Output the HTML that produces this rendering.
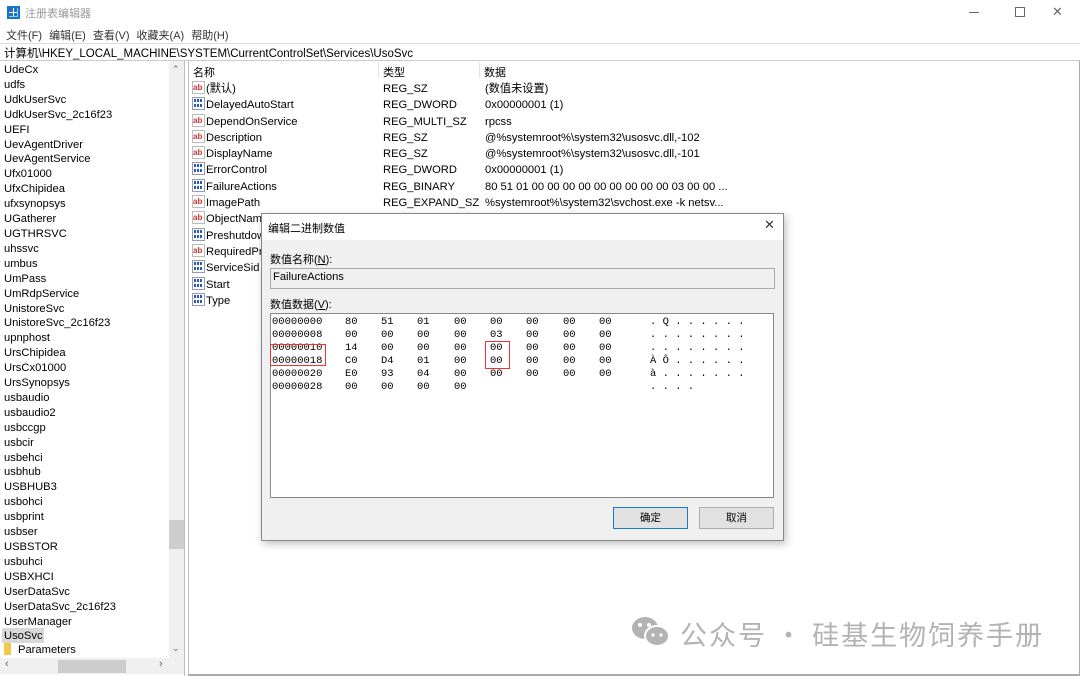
<!DOCTYPE html>
<html><head><meta charset="utf-8"><style>
*{margin:0;padding:0;box-sizing:border-box}
body{width:1080px;height:676px;overflow:hidden;background:#fff;font-family:"Liberation Sans","Noto Sans CJK SC",sans-serif;font-size:11px;color:#000;position:relative}
.a{position:absolute;white-space:nowrap}
.mono{font-family:"Liberation Mono","DejaVu Sans Mono",monospace;font-size:10.5px;line-height:12.9px;top:316px}
</style></head><body>
<!-- title bar -->
<div class="a" style="left:7px;top:6px;width:13px;height:13px;background:#1a73c8"></div>
<div class="a" style="left:9px;top:8px;width:9px;height:9px;border:1px solid #9cd;border-width:0 1px 1px 0;background:linear-gradient(#fff 0 0) 4px 0/1px 100% no-repeat,linear-gradient(#fff 0 0) 0 4px/100% 1px no-repeat"></div>
<div class="a" style="left:25px;top:5px;color:#999;font-size:11px">注册表编辑器</div>
<div class="a" style="left:969px;top:12px;width:10px;height:1px;background:#666"></div>
<div class="a" style="left:1015px;top:7px;width:10px;height:10px;border:1px solid #666"></div>
<div class="a" style="left:1052px;top:4px;font-size:13px;color:#666">✕</div>
<!-- menu -->
<div class="a" style="left:6px;top:27px;color:#333;word-spacing:4px">文件(F) 编辑(E) 查看(V) 收藏夹(A) 帮助(H)</div>
<div class="a" style="left:0;top:43px;width:1080px;height:18px;border-top:1px solid #ddd;border-bottom:1px solid #ccc"></div>
<div class="a" style="left:4px;top:45px;font-size:11.5px">计算机\HKEY_LOCAL_MACHINE\SYSTEM\CurrentControlSet\Services\UsoSvc</div>
<!-- left pane -->
<div class="a" style="left:0;top:61px;width:185px;height:615px;border-right:1px solid #bbb"></div>
<div class="a" style="left:169px;top:61px;width:15px;height:597px;background:#f0f0f0"></div>
<div class="a" style="left:169px;top:520px;width:15px;height:29px;background:#cdcdcd"></div>
<div class="a" style="left:172px;top:64px;color:#666;font-size:9px">⌃</div>
<div class="a" style="left:172px;top:643px;color:#666;font-size:9px">⌄</div>
<div class="a" style="left:0;top:658px;width:184px;height:16px;background:#f0f0f0"></div>
<div class="a" style="left:58px;top:660px;width:68px;height:13px;background:#cdcdcd"></div>
<div class="a" style="left:5px;top:658px;color:#666">‹</div>
<div class="a" style="left:159px;top:658px;color:#666">›</div>
<div class="a" style="left:2px;top:628px;width:42px;height:15px;background:#d9d9d9"></div>
<div class="a" style="left:4px;top:643px;width:7px;height:12px;background:#f4c64a"></div>
<div class="a" style="left:4px;top:63px;line-height:14.9px;font-size:11.2px">UdeCx<br>udfs<br>UdkUserSvc<br>UdkUserSvc_2c16f23<br>UEFI<br>UevAgentDriver<br>UevAgentService<br>Ufx01000<br>UfxChipidea<br>ufxsynopsys<br>UGatherer<br>UGTHRSVC<br>uhssvc<br>umbus<br>UmPass<br>UmRdpService<br>UnistoreSvc<br>UnistoreSvc_2c16f23<br>upnphost<br>UrsChipidea<br>UrsCx01000<br>UrsSynopsys<br>usbaudio<br>usbaudio2<br>usbccgp<br>usbcir<br>usbehci<br>usbhub<br>USBHUB3<br>usbohci<br>usbprint<br>usbser<br>USBSTOR<br>usbuhci<br>USBXHCI<br>UserDataSvc<br>UserDataSvc_2c16f23<br>UserManager<br>UsoSvc</div>
<div class="a" style="left:18px;top:644px;font-size:11.2px">Parameters</div>
<!-- right pane -->
<div class="a" style="left:188px;top:61px;width:892px;height:615px;border-left:1px solid #bbb;border-right:1px solid #aaa;border-bottom:2px solid #aaa"></div>
<div class="a" style="left:378px;top:62px;width:1px;height:16px;background:#e5e5e5"></div>
<div class="a" style="left:479px;top:62px;width:1px;height:16px;background:#e5e5e5"></div>
<div class="a" style="left:193px;top:64px">名称</div>
<div class="a" style="left:383px;top:64px">类型</div>
<div class="a" style="left:484px;top:64px">数据</div>
<div class="a" style="left:206px;top:81px;line-height:16.3px;font-size:11.2px">(默认)<br>DelayedAutoStart<br>DependOnService<br>Description<br>DisplayName<br>ErrorControl<br>FailureActions<br>ImagePath<br>ObjectName<br>Preshutdow<br>RequiredPr<br>ServiceSid<br>Start<br>Type</div>
<div class="a" style="left:383px;top:81px;line-height:16.3px;font-size:11.2px">REG_SZ<br>REG_DWORD<br>REG_MULTI_SZ<br>REG_SZ<br>REG_SZ<br>REG_DWORD<br>REG_BINARY<br>REG_EXPAND_SZ</div>
<div class="a" style="left:485px;top:81px;line-height:16.3px;font-size:11.2px">(数值未设置)<br>0x00000001 (1)<br>rpcss<br>@%systemroot%\system32\usosvc.dll,-102<br>@%systemroot%\system32\usosvc.dll,-101<br>0x00000001 (1)<br>80 51 01 00 00 00 00 00 00 00 00 00 03 00 00 ...<br>%systemroot%\system32\svchost.exe -k netsv...</div>
<!-- icons -->
<svg class="a" style="left:192px;top:81px" width="14" height="230">
<defs>
<g id="ab"><rect x="0.5" y="0.5" width="12" height="12" fill="#fff" stroke="#bbb"/><text x="1" y="9" fill="#c33" font-family="Liberation Sans" font-size="8" font-weight="bold">ab</text></g>
<g id="bn"><rect x="0.5" y="0.5" width="12" height="12" fill="#fff" stroke="#99b"/><g fill="#2a5ab0"><rect x="2" y="2" width="2" height="3"/><rect x="5" y="2" width="2" height="3"/><rect x="8" y="2" width="2" height="3"/><rect x="2" y="7" width="2" height="3"/><rect x="5" y="7" width="2" height="3"/><rect x="8" y="7" width="2" height="3"/></g></g>
</defs>
<use href="#ab" y="0"/><use href="#bn" y="16"/><use href="#ab" y="33"/><use href="#ab" y="49"/><use href="#ab" y="65"/><use href="#bn" y="81"/><use href="#bn" y="98"/><use href="#ab" y="114"/><use href="#ab" y="130"/><use href="#bn" y="147"/><use href="#ab" y="163"/><use href="#bn" y="179"/><use href="#bn" y="196"/><use href="#bn" y="212"/>
</svg>
<!-- dialog -->
<div class="a" style="left:261px;top:213px;width:523px;height:328px;background:#f0f0f0;border:1px solid #888;box-shadow:2px 3px 8px rgba(0,0,0,.25)"></div>
<div class="a" style="left:262px;top:214px;width:521px;height:26px;background:#fff"></div>
<div class="a" style="left:268px;top:220px">编辑二进制数值</div>
<div class="a" style="left:764px;top:217px;font-size:13px;color:#333">✕</div>
<div class="a" style="left:270px;top:251px">数值名称(<u>N</u>):</div>
<div class="a" style="left:270px;top:268px;width:505px;height:21px;border:1px solid #aaa;background:#f0f0f0"></div>
<div class="a" style="left:273px;top:271px;font-size:11.2px">FailureActions</div>
<div class="a" style="left:270px;top:296px">数值数据(<u>V</u>):</div>
<div class="a" style="left:270px;top:313px;width:504px;height:185px;border:1px solid #888;background:#fff"></div>
<div class="a mono" style="left:272px">00000000<br>00000008<br>00000010<br>00000018<br>00000020<br>00000028</div>
<div class="a mono" style="left:345px">80<br>00<br>14<br>C0<br>E0<br>00</div>
<div class="a mono" style="left:381px">51<br>00<br>00<br>D4<br>93<br>00</div>
<div class="a mono" style="left:417px">01<br>00<br>00<br>01<br>04<br>00</div>
<div class="a mono" style="left:454px">00<br>00<br>00<br>00<br>00<br>00</div>
<div class="a mono" style="left:490px">00<br>03<br>00<br>00<br>00</div>
<div class="a mono" style="left:526px">00<br>00<br>00<br>00<br>00</div>
<div class="a mono" style="left:563px">00<br>00<br>00<br>00<br>00</div>
<div class="a mono" style="left:599px">00<br>00<br>00<br>00<br>00</div>
<div class="a mono" style="left:650px">. Q . . . . . .<br>. . . . . . . .<br>. . . . . . . .<br>À Ô . . . . . .<br>à . . . . . . .<br>. . . .</div>
<div class="a" style="left:270px;top:344px;width:56px;height:22px;border:1.5px solid #e33"></div>
<div class="a" style="left:485px;top:341px;width:25px;height:28px;border:1.5px solid #e33"></div>
<div class="a" style="left:613px;top:507px;width:75px;height:22px;border:1px solid #1a7ad6;background:#e1e1e1;text-align:center;line-height:20px;font-size:10.5px">确定</div>
<div class="a" style="left:699px;top:507px;width:75px;height:22px;border:1px solid #adadad;background:#e1e1e1;text-align:center;line-height:20px;font-size:10.5px">取消</div>
<!-- watermark -->
<svg class="a" style="left:630px;top:614px" width="44" height="36"><ellipse cx="15" cy="14" rx="13" ry="11" fill="#b3b3b3"/><ellipse cx="27" cy="22" rx="12" ry="10" fill="#b3b3b3" stroke="#fff" stroke-width="2"/><circle cx="10" cy="11" r="2" fill="#fff"/><circle cx="19" cy="11" r="2" fill="#fff"/><circle cx="23" cy="21" r="1.6" fill="#fff"/><circle cx="31" cy="21" r="1.6" fill="#fff"/></svg>
<div class="a" style="left:680px;top:614px;font-size:27px;color:#b3b3b3;letter-spacing:2px;font-family:'Noto Sans CJK SC',sans-serif">公众号 · 硅基生物饲养手册</div>
</body></html>
